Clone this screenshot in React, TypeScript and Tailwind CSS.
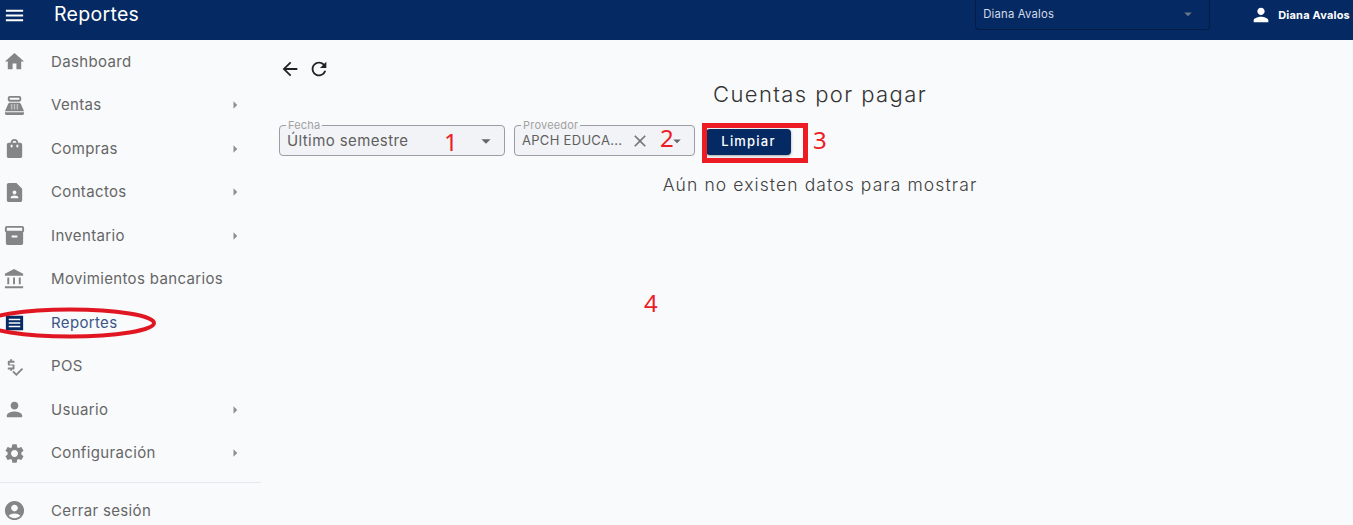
import { ReactNode } from 'react';

const icons = {
  menu: 'M3 18h18v-2H3v2zm0-5h18v-2H3v2zm0-7v2h18V6H3z',
  home: 'M10 20v-6h4v6h5v-8h3L12 3 2 12h3v8z',
  ventas:
    'M17 2H7c-1.1 0-2 .9-2 2v2c0 1.1.9 2 2 2h10c1.1 0 2-.9 2-2V4c0-1.1-.9-2-2-2zm0 4H7V4h10v2zm3 16H4c-1.1 0-2-.9-2-2v-1h20v1c0 1.1-.9 2-2 2zm-1.47-11.81C18.21 9.47 17.49 9 16.7 9H7.3c-.79 0-1.51.47-1.83 1.19L2 18h20l-3.47-7.81zM9.5 16h-1c-.28 0-.5-.22-.5-.5s.22-.5.5-.5h1c.28 0 .5.22.5.5s-.22.5-.5.5zm0-2h-1c-.28 0-.5-.22-.5-.5s.22-.5.5-.5h1c.28 0 .5.22.5.5s-.22.5-.5.5zm0-2h-1c-.28 0-.5-.22-.5-.5s.22-.5.5-.5h1c.28 0 .5.22.5.5s-.22.5-.5.5zm3 4h-1c-.28 0-.5-.22-.5-.5s.22-.5.5-.5h1c.28 0 .5.22.5.5s-.22.5-.5.5zm0-2h-1c-.28 0-.5-.22-.5-.5s.22-.5.5-.5h1c.28 0 .5.22.5.5s-.22.5-.5.5zm0-2h-1c-.28 0-.5-.22-.5-.5s.22-.5.5-.5h1c.28 0 .5.22.5.5s-.22.5-.5.5zm3 4h-1c-.28 0-.5-.22-.5-.5s.22-.5.5-.5h1c.28 0 .5.22.5.5s-.22.5-.5.5zm0-2h-1c-.28 0-.5-.22-.5-.5s.22-.5.5-.5h1c.28 0 .5.22.5.5s-.22.5-.5.5zm0-2h-1c-.28 0-.5-.22-.5-.5s.22-.5.5-.5h1c.28 0 .5.22.5.5s-.22.5-.5.5z',
  bag: 'M18 6h-2c0-2.21-1.79-4-4-4S8 3.79 8 6H6c-1.1 0-2 .9-2 2v12c0 1.1.9 2 2 2h12c1.1 0 2-.9 2-2V8c0-1.1-.9-2-2-2zm-8 4c0 .55-.45 1-1 1s-1-.45-1-1V8h2v2zm2-6c1.1 0 2 .9 2 2h-4c0-1.1.9-2 2-2zm4 6c0 .55-.45 1-1 1s-1-.45-1-1V8h2v2z',
  contact:
    'M14 2H6c-1.1 0-1.99.9-1.99 2L4 20c0 1.1.89 2 1.99 2H18c1.1 0 2-.9 2-2V8l-6-6zm-2 8c1.1 0 2 .9 2 2s-.9 2-2 2-2-.9-2-2 .9-2 2-2zm4 8H8v-.57c0-.81.48-1.53 1.22-1.85.85-.37 1.79-.58 2.78-.58.99 0 1.93.21 2.78.58.74.32 1.22 1.04 1.22 1.85V18z',
  archive:
    'M20 2H4c-1 0-2 .9-2 2v3.01c0 .72.43 1.34 1 1.69V20c0 1.1 1.1 2 2 2h14c.9 0 2-.9 2-2V8.7c.57-.35 1-.97 1-1.69V4c0-1.1-1-2-2-2zm-5 12H9v-2h6v2zm5-7H4V4l16-.02V7z',
  bank: 'M6.5 10h-2v7h2v-7zm6 0h-2v7h2v-7zm8.5 9H2v2h19v-2zm-2.5-9h-2v7h2v-7zM11.5 1L2 6v2h19V6l-9.5-5z',
  report: 'M3 5h18v15H3V5zm3 3v1.6h12V8H6zm0 3.7v1.6h12v-1.6H6zm0 3.7V17h12v-1.6H6z',
  pos: 'M11 15c.55 0 1-.45 1-1v-3c0-.55-.45-1-1-1H7V8h5V6H9.5V4.5h-2V6H6c-.55 0-1 .45-1 1v3c0 .55.45 1 1 1h4v2H5v2h2.5v1.5h2V15H11zm8.59-1.41-5.66 5.66-2.83-2.83-1.41 1.41L13.93 22 21 14.93z',
  person:
    'M12 12c2.21 0 4-1.79 4-4s-1.79-4-4-4-4 1.79-4 4 1.79 4 4 4zm0 2c-2.67 0-8 1.34-8 4v2h16v-2c0-2.66-5.33-4-8-4z',
  settings:
    'M19.14 12.94c.04-.3.06-.61.06-.94 0-.32-.02-.64-.07-.94l2.03-1.58c.18-.14.23-.41.12-.61l-1.92-3.32c-.12-.22-.37-.29-.59-.22l-2.39.96c-.5-.38-1.03-.7-1.62-.94l-.36-2.54c-.04-.24-.24-.41-.48-.41h-3.84c-.24 0-.43.17-.47.41l-.36 2.54c-.59.24-1.13.57-1.62.94l-2.39-.96c-.22-.08-.47 0-.59.22L2.74 8.87c-.12.21-.08.47.12.61l2.03 1.58c-.05.3-.09.63-.09.94s.02.64.07.94l-2.03 1.58c-.18.14-.23.41-.12.61l1.92 3.32c.12.22.37.29.59.22l2.39-.96c.5.38 1.03.7 1.62.94l.36 2.54c.05.24.24.41.48.41h3.84c.24 0 .44-.17.47-.41l.36-2.54c.59-.24 1.13-.56 1.62-.94l2.39.96c.22.08.47 0 .59-.22l1.92-3.32c.12-.22.07-.47-.12-.61l-2.01-1.58zM12 15.6c-1.98 0-3.6-1.62-3.6-3.6s1.62-3.6 3.6-3.6 3.6 1.62 3.6 3.6-1.62 3.6-3.6 3.6z',
  account:
    'M12 2C6.48 2 2 6.48 2 12s4.48 10 10 10 10-4.48 10-10S17.52 2 12 2zm0 4c1.93 0 3.5 1.57 3.5 3.5S13.93 13 12 13s-3.5-1.57-3.5-3.5S10.07 6 12 6zm0 14c-2.03 0-4.43-.82-6.14-2.88C7.55 15.8 9.68 15 12 15s4.45.8 6.14 2.12C16.43 19.18 14.03 20 12 20z',
  back: 'M20 11H7.83l5.59-5.59L12 4l-8 8 8 8 1.41-1.41L7.83 13H20v-2z',
  refresh:
    'M17.65 6.35C16.2 4.9 14.21 4 12 4c-4.42 0-7.99 3.58-7.99 8s3.57 8 7.99 8c3.73 0 6.84-2.55 7.73-6h-2.08c-.82 2.33-3.04 4-5.65 4-3.31 0-6-2.69-6-6s2.69-6 6-6c1.66 0 3.14.69 4.22 1.78L13 11h7V4l-2.35 2.35z',
  close:
    'M19 6.41 17.59 5 12 10.59 6.41 5 5 6.41 10.59 12 5 17.59 6.41 19 12 13.41 17.59 19 19 17.59 13.41 12z',
  dropdown: 'M7 10l5 5 5-5z',
  right: 'M10 17l5-5-5-5v10z',
};

function Icon({ d, className }: { d: string; className: string }) {
  return (
    <svg viewBox="0 0 24 24" fill="currentColor" className={className}>
      <path d={d} />
    </svg>
  );
}

const menuItems = [
  { label: 'Dashboard', icon: icons.home },
  { label: 'Ventas', icon: icons.ventas, arrow: true },
  { label: 'Compras', icon: icons.bag, arrow: true },
  { label: 'Contactos', icon: icons.contact, arrow: true },
  { label: 'Inventario', icon: icons.archive, arrow: true },
  { label: 'Movimientos bancarios', icon: icons.bank },
  { label: 'Reportes', icon: icons.report, active: true },
  { label: 'POS', icon: icons.pos },
  { label: 'Usuario', icon: icons.person, arrow: true },
  { label: 'Configuración', icon: icons.settings, arrow: true },
];

function MenuRow({
  label,
  icon,
  arrow,
  active,
}: {
  label: string;
  icon: string;
  arrow?: boolean;
  active?: boolean;
}) {
  return (
    <div className="flex h-[43.5px] items-center">
      <Icon
        d={icon}
        className={`ml-[3px] h-[23px] w-[23px] ${active ? 'text-[#062a63]' : 'text-[#858585]'}`}
      />
      <span
        className={`ml-[25px] text-[15px] tracking-[0.35px] ${active ? 'text-[#3a5689]' : 'text-[#666666]'}`}
      >
        {label}
      </span>
      {arrow && <Icon d={icons.right} className="absolute left-[226px] h-[18px] w-[18px] text-[#8f8f8f]" />}
    </div>
  );
}

function Field({
  label,
  width,
  children,
}: {
  label: string;
  width: string;
  children: ReactNode;
}) {
  return (
    <fieldset className={`h-[36px] rounded-[4px] border border-[#9a9ea3] bg-[#f1f3f6] ${width}`}>
      <legend className="ml-[6px] px-[2px] text-[11px] leading-[11px] tracking-[0.2px] text-[#a2a2a2]">{label}</legend>
      <div className="flex h-[20px] items-center pl-[7px]">{children}</div>
    </fieldset>
  );
}

function Mark({ className, children }: { className: string; children: ReactNode }) {
  return (
    <span
      className={`absolute text-[24px] leading-none text-[#ed1c24] [font-family:'Noto_Sans',sans-serif] ${className}`}
    >
      {children}
    </span>
  );
}

export default function App() {
  return (
    <div className="relative h-[525px] w-[1353px] overflow-hidden bg-[#f9fafc] font-['Inter',sans-serif]">
      {/* Top bar */}
      <header className="flex h-[40px] items-center bg-[#052a63] text-white">
        <Icon d={icons.menu} className="ml-[3px] -mt-[10px] h-[23px] w-[23px]" />
        <span className="ml-[28px] -mt-[10px] text-[19.5px] tracking-[0.3px]">Reportes</span>
        <div className="ml-[836px] -mt-[11px] flex h-[30px] w-[235px] items-center rounded-b-[4px] border border-t-0 border-[#021c45] pl-[7px] pr-[12px]">
          <span className="text-[11.3px] tracking-[0.2px] text-[#d5dbe6]">Diana Avalos</span>
          <Icon d={icons.dropdown} className="ml-auto h-[18px] w-[18px] text-[#6d7787]" />
        </div>
        <Icon d={icons.person} className="ml-[40px] -mt-[10px] h-[22px] w-[22px]" />
        <span className="ml-[6px] -mt-[10px] whitespace-nowrap text-[11px] font-bold tracking-[0.2px]">Diana Avalos</span>
      </header>

      <div className="flex">
        {/* Sidebar */}
        <aside className="w-[261px] shrink-0">
          {menuItems.map((item) => (
            <MenuRow key={item.label} {...item} />
          ))}
          <div className="mt-[7px] border-t border-[#e8e9ec]" />
          <div className="mt-[6px]">
            <MenuRow label="Cerrar sesión" icon={icons.account} />
          </div>
        </aside>

        {/* Content */}
        <main className="min-w-0 flex-1 pl-[18px]">
          <div className="mt-[19px] flex h-[20px] items-center gap-[7px] text-[#222]">
            <Icon d={icons.back} className="h-[22px] w-[22px]" />
            <Icon d={icons.refresh} className="h-[22px] w-[22px]" />
          </div>
          <div className="w-[1082px]">
            <h1 className="mt-[3px] text-center text-[22px] font-light leading-[24px] tracking-[1.4px] text-[#333333]">Cuentas por pagar</h1>
            <div className="mt-[14px] flex items-start">
              <Field label="Fecha" width="w-[226px]">
                <span className="text-[15px] tracking-[0.4px] text-[#5f5f5f]">Último semestre</span>
                <Icon d={icons.dropdown} className="ml-auto mr-[7px] h-[22px] w-[22px] text-[#666]" />
              </Field>
              <div className="ml-[9px]">
                <Field label="Proveedor" width="w-[181px]">
                  <span className="whitespace-nowrap text-[13px] tracking-[0.3px] text-[#5f5f5f]">APCH EDUCA...</span>
                  <Icon d={icons.close} className="ml-[8px] h-[20px] w-[20px] text-[#777]" />
                  <Icon d={icons.dropdown} className="ml-auto mr-[8px] h-[18px] w-[18px] text-[#666]" />
                </Field>
              </div>
              <button
                type="button"
                className="ml-[11px] mt-[9px] h-[26px] w-[85px] rounded-[4px] bg-[#052a63] text-[13px] font-medium tracking-[1.2px] text-white shadow-[0_1px_3px_rgba(0,0,0,0.35)]"
              >
                Limpiar
              </button>
            </div>
            <p className="mt-[18px] text-center text-[17.5px] font-light leading-[22px] tracking-[1.1px] text-[#404040]">
              Aún no existen datos para mostrar
            </p>
          </div>
        </main>
      </div>

      {/* Red annotations drawn on top of the screenshot */}
      <div className="absolute left-[702px] top-[123px] h-[40px] w-[106px] border-[5px] border-[#ed1c24]" />
      <svg viewBox="0 0 160 40" className="absolute left-0 top-[306px] h-[40px] w-[160px]" fill="none">
        <ellipse cx="70" cy="17" rx="84" ry="13.5" stroke="#e01722" strokeWidth="4" />
      </svg>
      <Mark className="left-[444px] top-[130px]">1</Mark>
      <Mark className="left-[660px] top-[126px]">2</Mark>
      <Mark className="left-[813px] top-[128px]">3</Mark>
      <Mark className="left-[644px] top-[291px]">4</Mark>
    </div>
  );
}
